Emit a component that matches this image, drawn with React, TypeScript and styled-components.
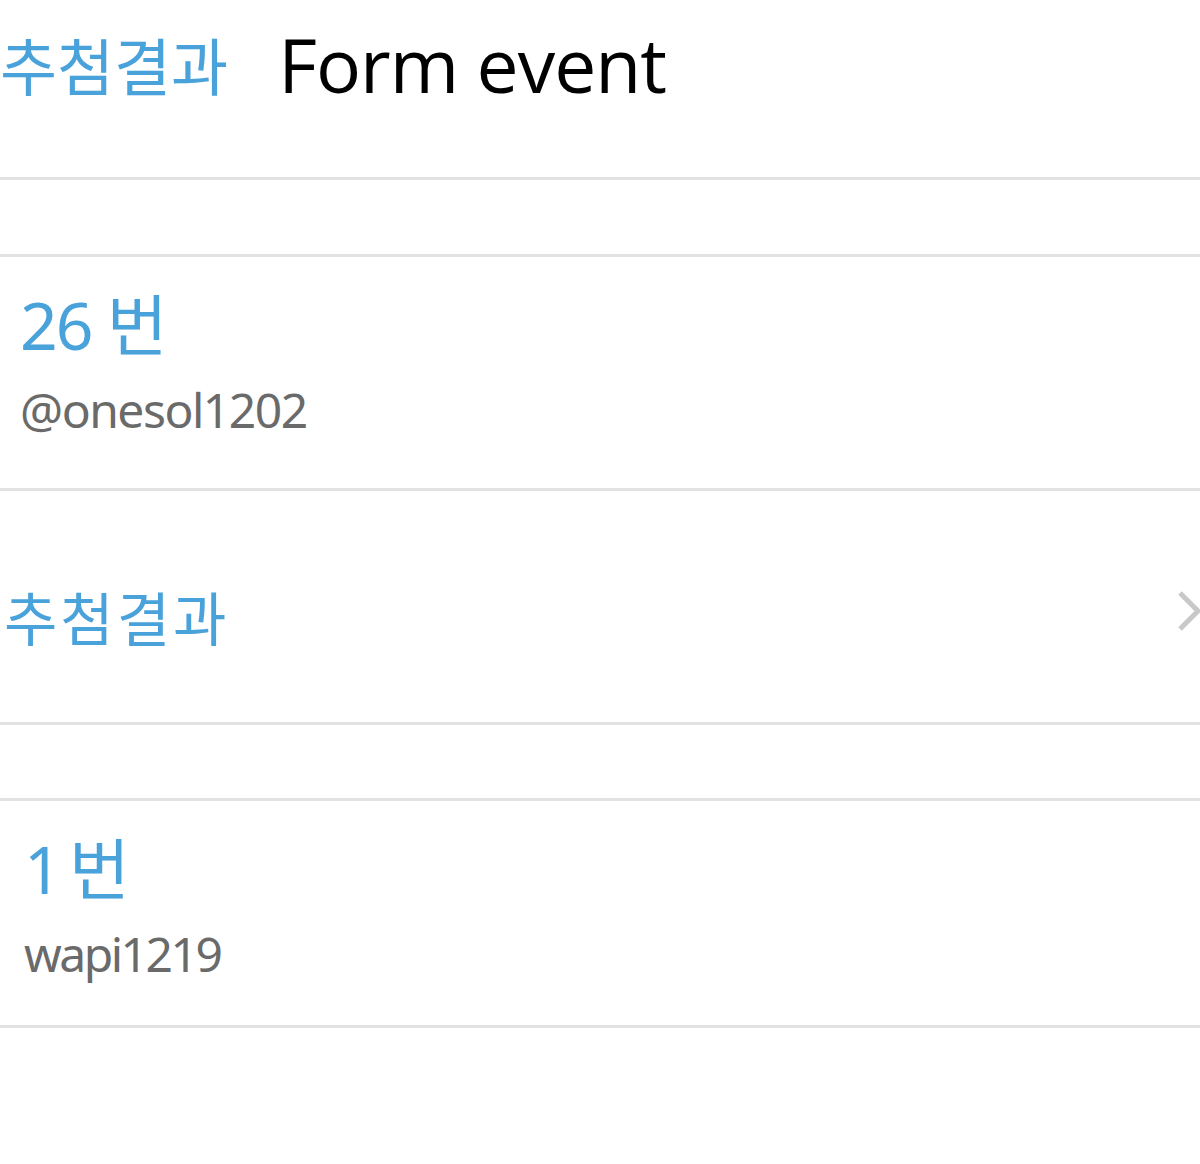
import React from "react";
import styled, { createGlobalStyle } from "styled-components";

const GlobalStyle = createGlobalStyle`
  html, body {
    margin: 0;
    padding: 0;
    background: #ffffff;
  }
  body {
    font-family: "Noto Sans", "Noto Sans CJK KR", sans-serif;
    overflow: hidden;
  }
`;

const BLUE = "#4aa2da";
const LINE = "#e2e2e2";

const Page = styled.div`
  width: 1200px;
  display: flex;
  flex-direction: column;
`;

const Header = styled.div`
  height: 180px;
  display: flex;
  align-items: flex-start;
  gap: 54px;
  padding-top: 21px;
  box-sizing: border-box;
  border-bottom: 3px solid ${LINE};
`;

const Back = styled.span`
  font-family: "Noto Sans CJK KR", sans-serif;
  font-size: 62px;
  letter-spacing: 0px;
  color: ${BLUE};
  line-height: 1.4;
`;

const Title = styled.span`
  font-family: "Open Sans", "Noto Sans", sans-serif;
  font-size: 75px;
  letter-spacing: -1px;
  color: #000000;
  line-height: 1.4;
  margin-top: -9px;
  margin-left: -4px;
`;

const Spacer = styled.div<{ $h: number }>`
  height: ${(p) => p.$h}px;
  border-bottom: 3px solid ${LINE};
`;

const Entry = styled.div<{ $h: number; $left: number }>`
  height: ${(p) => p.$h}px;
  box-sizing: border-box;
  padding: 28px 0 0 ${(p) => p.$left}px;
  display: flex;
  flex-direction: column;
  border-bottom: 3px solid ${LINE};
`;

const Rank = styled.div<{ $space?: number }>`
  font-family: "Noto Sans", "Noto Sans CJK KR", sans-serif;
  font-size: 66px;
  color: ${BLUE};
  line-height: 1.2;
  letter-spacing: -2px;
  word-spacing: ${(p) => p.$space ?? 0}px;
`;

const User = styled.div<{ $track?: number }>`
  font-family: "Noto Sans", sans-serif;
  font-size: 48px;
  color: #6a6a6a;
  line-height: 1.2;
  letter-spacing: ${(p) => p.$track ?? -1.5}px;
  margin-top: 17px;
`;

const LinkRow = styled.div`
  height: 234px;
  box-sizing: border-box;
  display: flex;
  align-items: center;
  justify-content: space-between;
  padding: 18px 0 0 4px;
  border-bottom: 3px solid ${LINE};
`;

const LinkText = styled.span`
  font-family: "Noto Sans CJK KR", sans-serif;
  font-size: 58px;
  letter-spacing: 3px;
  color: ${BLUE};
  line-height: 1;
`;

const Chevron = styled.svg`
  width: 24px;
  height: 44px;
  align-self: center;
  margin-top: -10px;
`;

export default function App() {
  return (
    <Page>
      <GlobalStyle />
      <Header>
        <Back>추첨결과</Back>
        <Title>Form event</Title>
      </Header>
      <Spacer $h={74} />
      <Entry $h={234} $left={20}>
        <Rank>26 번</Rank>
        <User>@onesol1202</User>
      </Entry>
      <LinkRow>
        <LinkText>추첨결과</LinkText>
        <Chevron viewBox="0 0 24 44">
          <path d="M4 4 L22 22 L4 40" fill="none" stroke="#c8c8c8" strokeWidth="5" />
        </Chevron>
      </LinkRow>
      <Spacer $h={73} />
      <Entry $h={227} $left={24}>
        <Rank $space={-6}>1 번</Rank>
        <User $track={-2.5}>wapi1219</User>
      </Entry>
    </Page>
  );
}
